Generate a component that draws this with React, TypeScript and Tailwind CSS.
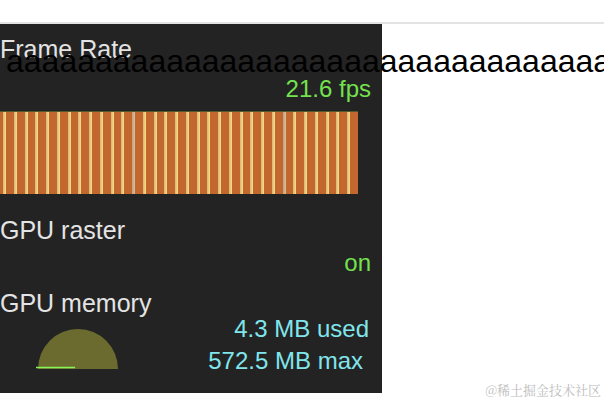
import React from "react";

const UNITS = Array.from({ length: 33 }, (_, i) => i);
const GRAY = new Set([12, 26]);

function FrameBars() {
  return (
    <div className="flex h-[82px] w-[358px] bg-[#c2682f]">
      <div className="w-[3px] shrink-0" />
      {UNITS.map((i) => (
        <div key={i} className="flex flex-1">
          <div
            className={
              GRAY.has(i)
                ? "w-[3px] shrink-0 bg-gradient-to-r from-[#bda284] to-[#d8c09a]"
                : "w-[3px] shrink-0 bg-gradient-to-r from-[#d9b47a] to-[#f8de82]"
            }
          />
          <div className="flex-1" />
        </div>
      ))}
    </div>
  );
}

function Gauge() {
  return (
    <svg width="90" height="44" viewBox="0 0 90 44" className="ml-[33px] mb-[2px] shrink-0">
      <defs>
        <filter id="glow" x="-20%" y="-200%" width="140%" height="500%">
          <feGaussianBlur stdDeviation="1.5" />
        </filter>
      </defs>
      <path d="M5 42 A40 40 0 0 1 85 42 Z" fill="#6c6b2f" />
      <line x1="3" y1="40.5" x2="44" y2="40.5" stroke="#4fd02a" strokeWidth="4" opacity="0.7" filter="url(#glow)" />
      <line x1="3" y1="40.5" x2="42" y2="40.5" stroke="#86f558" strokeWidth="1.5" />
    </svg>
  );
}

export default function App() {
  return (
    <div className="relative h-screen w-full overflow-hidden bg-white font-['Liberation_Sans',Arial,sans-serif]">
      <div className="h-[22px]" />
      <div className="h-[2px] w-full bg-[#e3e3e3]" />
      <div className="flex h-[369px] w-[382px] flex-col bg-[#232323] pt-[13px] pr-[11px]">
        <div className="text-[25px] leading-[25px] text-[#e4e4e4]">Frame Rate</div>
        <div className="mt-[15px] self-end text-[24px] leading-[24px] text-[#74e24f]">21.6 fps</div>
        <div className="mt-[10px] h-[1px] w-[358px] bg-[#4f5a2e]" />
        <FrameBars />
        <div className="mt-[24px] text-[25px] leading-[25px] text-[#e4e4e4]">GPU raster</div>
        <div className="mt-[8px] self-end text-[24px] leading-[24px] text-[#74e24f]">on</div>
        <div className="mt-[16px] text-[25px] leading-[25px] text-[#e4e4e4]">GPU memory</div>
        <div className="mt-[1px] flex items-end justify-between">
          <Gauge />
          <div className="flex flex-col items-end text-[24px] leading-[24px] text-[#80e6ec]">
            <div className="mr-[2px]">4.3 MB used</div>
            <div className="mt-[8px] mr-[8px]">572.5 MB max</div>
          </div>
        </div>
      </div>
      <div className="absolute left-[6px] top-[45px] whitespace-nowrap text-[32px] leading-[32px] text-black">
        aaaaaaaaaaaaaaaaaaaaaaaaaaaaaaaaaaaaaaaa
      </div>
      <div className="absolute bottom-[7px] right-[3px] text-[13px] leading-[14px] text-[#bdbdbd] font-['Noto_Serif_CJK_SC','Noto_Sans_CJK_SC',serif]">
        @稀土掘金技术社区
      </div>
    </div>
  );
}
